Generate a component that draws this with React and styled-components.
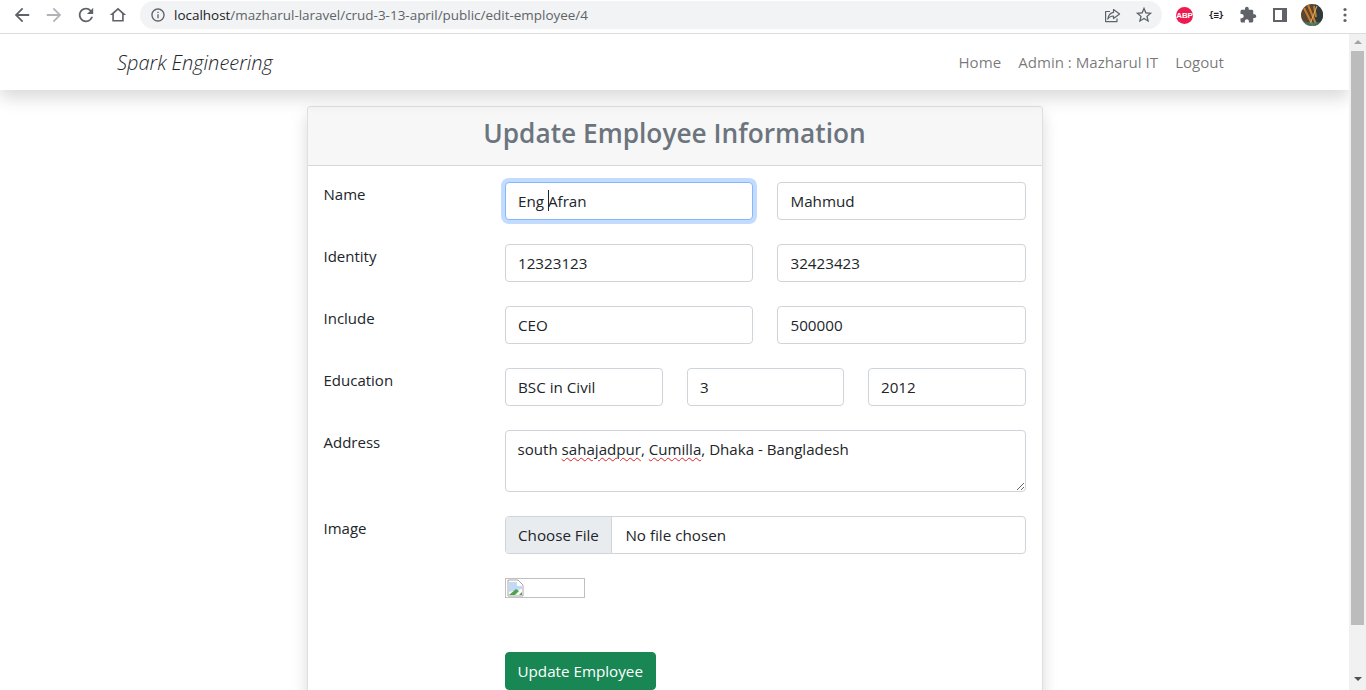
import React from 'react'
import styled, { createGlobalStyle } from 'styled-components'

const Global = createGlobalStyle`
  html, body { margin: 0; padding: 0; height: 100%; overflow: hidden; background: #fff; }
  body { font-family: "Open Sans", "Noto Sans", sans-serif; font-size: 15.2px; color: #212529; }
  * { box-sizing: border-box; }
`

const Page = styled.div`
  width: 1366px;
  height: 690px;
  display: flex;
  flex-direction: column;
  overflow: hidden;
`

const BrowserBar = styled.div`
  height: 34px;
  flex: none;
  display: flex;
  align-items: center;
  background: #fff;
  border-bottom: 1px solid #dadce0;
  padding: 0 0 3px 13px;
`

const NavIcons = styled.div`
  display: flex;
  align-items: center;
  gap: 14px;
  margin-right: 13px;
`

const ChromeIcon = styled.svg`
  width: 18px;
  height: 18px;
  flex: none;
  display: block;
  fill: ${p => p.$color || '#5f6368'};
`

const InfoIcon = styled(ChromeIcon)`
  width: 16px;
  height: 16px;
`

const Omnibox = styled.div`
  width: 1022px;
  height: 28px;
  border-radius: 14px;
  background: #f1f3f4;
  display: flex;
  align-items: center;
  padding: 0 9px 0 10px;
  flex: none;
`

const UrlText = styled.div`
  margin-left: 8px;
  font-size: 13.46px;
  color: #5f6368;
  flex: 1;
  white-space: nowrap;
  b { font-weight: 400; color: #202124; }
`

const OmniActions = styled.div`
  display: flex;
  align-items: center;
  gap: 14px;
`

const Extensions = styled.div`
  display: flex;
  align-items: center;
  margin-left: 14px;
  gap: 14px;
`

const AbpBadge = styled.div`
  width: 17px;
  height: 17px;
  border-radius: 50%;
  background: #ee1c4e;
  color: #fff;
  font: 700 8px "Liberation Sans", sans-serif;
  letter-spacing: -0.2px;
  display: flex;
  align-items: center;
  justify-content: center;
`

const BraceIcon = styled.div`
  width: 18px;
  text-align: center;
  font: 700 9px "DejaVu Sans Mono", monospace;
  color: #202124;
  white-space: nowrap;
  letter-spacing: -0.4px;
`

const Avatar = styled.svg`
  width: 22px;
  height: 22px;
  display: block;
  flex: none;
  margin: 0 -1px 0 -2px;
`

const Viewport = styled.div`
  flex: 1;
  display: flex;
  min-height: 0;
`

const Content = styled.div`
  width: 1349px;
  flex: none;
  overflow: hidden;
`

const Scrollbar = styled.div`
  width: 17px;
  flex: none;
  background: #f1f1f1;
  display: flex;
  flex-direction: column;
  align-items: center;
  padding-top: 6px;
`

const Arrow = styled.div`
  width: 0;
  height: 0;
  border-left: 4px solid transparent;
  border-right: 4px solid transparent;
  ${p => p.$down
    ? 'border-top: 4px solid #505050; margin-top: 52px;'
    : 'border-bottom: 4px solid #a3a3a3;'}
`

const Thumb = styled.div`
  width: 13px;
  height: 574px;
  margin-top: 7px;
  background: #bcbcbc;
`

const Navbar = styled.nav`
  height: 56px;
  background: #fff;
  box-shadow: 0 8px 16px rgba(0, 0, 0, 0.15);
  display: flex;
  align-items: center;
  justify-content: space-between;
  padding: 0 125px 0 117px;
  position: relative;
`

const Brand = styled.div`
  font-size: 20px;
  font-weight: 300;
  font-style: italic;
  color: #212529;
`

const NavLinks = styled.div`
  display: flex;
  gap: 17px;
`

const NavLink = styled.a`
  font-size: 15.1px;
  font-weight: 400;
  color: rgba(0, 0, 0, 0.55);
`

const Card = styled.section`
  width: 736px;
  margin: 16px auto 0;
  border: 1px solid rgba(0, 0, 0, 0.125);
  border-radius: 4px;
  box-shadow: 0 8px 16px rgba(0, 0, 0, 0.15);
  background: #fff;
`

const CardHeader = styled.header`
  height: 59px;
  padding-bottom: 7px;
  background: #f7f7f7;
  border-bottom: 1px solid rgba(0, 0, 0, 0.125);
  border-radius: 3px 3px 0 0;
  display: flex;
  align-items: center;
  justify-content: center;
`

const Title = styled.h1`
  margin: 0;
  font-size: 26.25px;
  font-weight: 600;
  color: #6c757d;
`

const Form = styled.form`
  padding: 16px;
  display: flex;
  flex-direction: column;
  gap: 24px;
`

const Row = styled.div`
  display: grid;
  grid-template-columns: 181px 1fr;
`

const Label = styled.label`
  font-size: 15px;
  line-height: 24px;
`

const Fields = styled.div`
  display: grid;
  grid-template-columns: ${p => p.$columns || '1fr 1fr'};
  gap: 24px;
`

const Input = styled.input`
  width: 100%;
  height: 38px;
  padding: 0 12.5px;
  font: inherit;
  color: #212529;
  background: #fff;
  border: 1px solid ${p => (p.$focused ? '#86b7fe' : '#ced4da')};
  border-radius: 4px;
  outline: none;
  box-shadow: ${p => (p.$focused ? '0 0 0 4px rgba(13, 110, 253, 0.25)' : 'none')};
`

const FocusWrap = styled.div`
  position: relative;
`

const Caret = styled.span`
  position: absolute;
  left: 43px;
  top: 8px;
  width: 1px;
  height: 21px;
  background: #212529;
`

const TextArea = styled.div`
  height: 62px;
  padding: 6px 12px;
  font-size: 15.1px;
  line-height: 24px;
  border: 1px solid #ced4da;
  border-radius: 4px;
  overflow: auto;
  resize: vertical;
`

const Misspelled = styled.span`
  text-decoration: underline wavy #e02020 1px;
  text-underline-offset: 2px;
`

const FileField = styled.div`
  height: 38px;
  display: flex;
  align-items: center;
  border: 1px solid #ced4da;
  border-radius: 4px;
  overflow: hidden;
`

const FileButton = styled.div`
  height: 100%;
  display: flex;
  align-items: center;
  padding: 0 12.5px;
  background: #e9ecef;
  border-right: 1px solid #ced4da;
`

const FileName = styled.span`
  margin-left: 13px;
`

const BrokenImage = styled.div`
  width: 80px;
  height: 20px;
  border: 1px solid #c0c0c0;
  padding-left: 1px;
  margin-bottom: 30px;
`

const SubmitButton = styled.button`
  height: 38px;
  padding: 0 12px;
  font: inherit;
  color: #fff;
  background: #198754;
  border: 1px solid #198754;
  border-radius: 4px;
`

function Glyph({ d, box = '2 2 20 20', color }) {
  return (
    <ChromeIcon viewBox={box} $color={color}>
      <path fillRule="evenodd" d={d} />
    </ChromeIcon>
  )
}

export default function App() {
  return (
    <Page>
      <Global />
      <BrowserBar>
        <NavIcons>
          <Glyph d="M20 11H7.83l5.59-5.59L12 4l-8 8 8 8 1.41-1.41L7.83 13H20v-2z" />
          <Glyph color="#b1b3b6" d="M12 4l-1.41 1.41L16.17 11H4v2h12.17l-5.58 5.59L12 20l8-8z" />
          <Glyph d="M17.65 6.35A7.958 7.958 0 0 0 12 4c-4.42 0-7.99 3.58-7.99 8s3.57 8 7.99 8c3.73 0 6.84-2.55 7.73-6h-2.08A5.99 5.99 0 0 1 12 18c-3.31 0-6-2.69-6-6s2.69-6 6-6c1.66 0 3.14.69 4.22 1.78L13 11h7V4l-2.35 2.35z" />
          <Glyph box="1 1 22 22" d="M12 3L2 12h3v8h14v-8h3zM12 5.9l5 4.5V18H7v-7.6z" />
        </NavIcons>
        <Omnibox>
          <InfoIcon viewBox="0 0 24 24">
            <path d="M11 7h2v2h-2zm0 4h2v6h-2zm1-9C6.48 2 2 6.48 2 12s4.48 10 10 10 10-4.48 10-10S17.52 2 12 2zm0 18c-4.41 0-8-3.59-8-8s3.59-8 8-8 8 3.59 8 8-3.59 8-8 8z" />
          </InfoIcon>
          <UrlText><b>localhost</b>/mazharul-laravel/crud-3-13-april/public/edit-employee/4</UrlText>
          <OmniActions>
            <ChromeIcon viewBox="0 0 18 18">
              <path
                d="M7 5.5H2.6V15.6H14V12.4M10.5 3.5L16.6 8 10.5 12.5V10C8 10 6 11 4.8 13.2 5.3 9.5 7.5 6.8 10.5 6.3z"
                fill="none"
                stroke="#5f6368"
                strokeWidth="1.2"
                strokeLinejoin="round"
              />
            </ChromeIcon>
            <Glyph box="1 1 22 22" d="M22 9.24l-7.19-.62L12 2 9.19 8.63 2 9.24l5.46 4.73L5.82 21 12 17.27 18.18 21l-1.63-7.03L22 9.24zM12 15.4l-3.76 2.27 1-4.28-3.32-2.88 4.38-.38L12 6.1l1.71 4.04 4.38.38-3.32 2.88 1 4.28L12 15.4z" />
          </OmniActions>
        </Omnibox>
        <Extensions>
          <AbpBadge>ABP</AbpBadge>
          <BraceIcon>{'{≡}'}</BraceIcon>
          <Glyph box="0 0 24 24" d="M20.5 11H19V7c0-1.1-.9-2-2-2h-4V3.5C13 2.12 11.88 1 10.5 1S8 2.12 8 3.5V5H4c-1.1 0-1.99.9-1.99 2v3.8H3.5c1.49 0 2.7 1.21 2.7 2.7s-1.21 2.7-2.7 2.7H2V20c0 1.1.9 2 2 2h3.8v-1.5c0-1.49 1.21-2.7 2.7-2.7 1.49 0 2.7 1.21 2.7 2.7V22H17c1.1 0 2-.9 2-2v-4h1.5c1.38 0 2.5-1.12 2.5-2.5S21.88 11 20.5 11z" />
          <Glyph box="0 0 18 18" d="M2 2h14v14H2zM4 4v10h7V4z" />
          <Avatar viewBox="0 0 22 22">
            <clipPath id="avatar-clip"><circle cx="11" cy="11" r="11" /></clipPath>
            <g clipPath="url(#avatar-clip)">
              <rect width="22" height="22" fill="#5a4630" />
              <rect x="14" width="8" height="22" fill="#2e3a3c" />
              <path d="M3 4l9 18M7 1l8 19M13 2l2 11" stroke="#c67c2e" strokeWidth="2" fill="none" />
              <path d="M16 2L9 20" stroke="#d9b36a" strokeWidth="1" fill="none" />
              <path d="M0 17c6 1 13 3 22 0v5H0z" fill="#3f7f76" opacity="0.75" />
            </g>
          </Avatar>
          <ChromeIcon viewBox="0 0 18 18">
            <circle cx="9" cy="3.5" r="1.6" />
            <circle cx="9" cy="9" r="1.6" />
            <circle cx="9" cy="14.5" r="1.6" />
          </ChromeIcon>
        </Extensions>
      </BrowserBar>
      <Viewport>
        <Content>
          <Navbar>
            <Brand>Spark Engineering</Brand>
            <NavLinks>
              <NavLink>Home</NavLink>
              <NavLink>Admin : Mazharul IT</NavLink>
              <NavLink>Logout</NavLink>
            </NavLinks>
          </Navbar>
          <Card>
            <CardHeader>
              <Title>Update Employee Information</Title>
            </CardHeader>
            <Form>
              <Row>
                <Label>Name</Label>
                <Fields>
                  <FocusWrap>
                    <Input $focused readOnly value="Eng Afran" />
                    <Caret />
                  </FocusWrap>
                  <Input readOnly value="Mahmud" />
                </Fields>
              </Row>
              <Row>
                <Label>Identity</Label>
                <Fields>
                  <Input readOnly value="12323123" />
                  <Input readOnly value="32423423" />
                </Fields>
              </Row>
              <Row>
                <Label>Include</Label>
                <Fields>
                  <Input readOnly value="CEO" />
                  <Input readOnly value="500000" />
                </Fields>
              </Row>
              <Row>
                <Label>Education</Label>
                <Fields $columns="158px 157px 1fr">
                  <Input readOnly value="BSC in Civil" />
                  <Input readOnly value="3" />
                  <Input readOnly value="2012" />
                </Fields>
              </Row>
              <Row>
                <Label>Address</Label>
                <TextArea>
                  south <Misspelled>sahajadpur</Misspelled>, <Misspelled>Cumilla</Misspelled>, Dhaka - Bangladesh
                </TextArea>
              </Row>
              <Row>
                <Label>Image</Label>
                <FileField>
                  <FileButton>Choose File</FileButton>
                  <FileName>No file chosen</FileName>
                </FileField>
              </Row>
              <Row>
                <span />
                <BrokenImage>
                  <svg width="17" height="18" viewBox="0 0 17 18">
                    <path d="M1 1h10l5 5v11H1z" fill="#fff" stroke="#a8a8a8" />
                    <path d="M2 3h8v4h5v3L2 13z" fill="#c4d9f5" />
                    <path d="M2 16l7-6 3 2-4 4z" fill="#4ea24a" />
                    <path d="M12 16l3-3v3z" fill="#4ea24a" />
                  </svg>
                </BrokenImage>
              </Row>
              <Row>
                <span />
                <div>
                  <SubmitButton type="button">Update Employee</SubmitButton>
                </div>
              </Row>
            </Form>
          </Card>
        </Content>
        <Scrollbar>
          <Arrow />
          <Thumb />
          <Arrow $down />
        </Scrollbar>
      </Viewport>
    </Page>
  )
}
